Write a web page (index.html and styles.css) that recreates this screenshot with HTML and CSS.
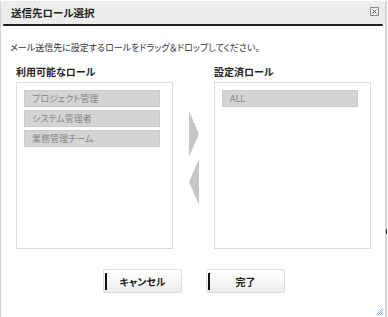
FILE: index.html
```html
<!DOCTYPE html>
<html lang="ja">
<head>
<meta charset="utf-8">
<link rel="stylesheet" href="styles.css">
</head>
<body>
<div class="dialog">
  <div class="header">
    <span class="title">送信先ロール選択</span>
    <span class="close" aria-label="閉じる">
      <svg width="9" height="9" viewBox="0 0 9 9"><rect x="0.5" y="0.5" width="8" height="8" fill="#f4f4f4" stroke="#8a8a8a"/><path d="M2.5 2.5 L6.5 6.5 M6.5 2.5 L2.5 6.5" stroke="#555" stroke-width="1"/></svg>
    </span>
  </div>
  <div class="rule"></div>
  <div class="content">
    <p class="lead">メール送信先に設定するロールをドラッグ＆ドロップしてください。</p>
    <div class="columns">
      <div class="col">
        <h3 class="col-title">利用可能なロール</h3>
        <div class="box">
          <div class="item">プロジェクト管理</div>
          <div class="item">システム管理者</div>
          <div class="item">業務管理チーム</div>
        </div>
      </div>
      <div class="arrows">
        <svg width="10" height="95" viewBox="0 0 10 95"><polygon points="0,0 10,23 0,46" fill="#c6c6c6"/><polygon points="10,48 0,71 10,94" fill="#c6c6c6"/></svg>
      </div>
      <div class="col">
        <h3 class="col-title">設定済ロール</h3>
        <div class="box">
          <div class="item">ALL</div>
        </div>
      </div>
    </div>
    <div class="buttons">
      <button class="btn">キャンセル</button>
      <button class="btn">完了</button>
    </div>
  </div>
  <svg class="grip" width="9" height="9" viewBox="0 0 9 9"><path d="M8 1 L1 8 M8 3 L3 8 M8 5 L5 8 M8 7 L7 8" stroke="#7fbde6" stroke-width="1"/></svg>
  <span class="scrollmark"></span>
</div>
</body>
</html>
```
FILE: styles.css
```css
* { box-sizing: border-box; }
html, body { margin: 0; padding: 0; background: #fff; }
body {
  font-family: "Noto Sans CJK JP", "Noto Sans", sans-serif;
  font-feature-settings: "palt";
  color: #333;
}
.dialog {
  position: relative;
  width: 387px;
  height: 317px;
  border-left: 1px solid #d4d4d4;
  border-right: 2px solid #d4d4d4;
  border-bottom: 1px solid #d4d4d4;
  background: #fff;
}
.header {
  margin-top: 1px;
  height: 23px;
  background: #ececec;
  border-radius: 4px 4px 0 0;
  display: flex;
  align-items: center;
  justify-content: space-between;
  padding: 0 6px 0 10px;
}
.title {
  font-size: 10.5px;
  font-weight: bold;
  color: #222;
  line-height: 14px;
}
.close { display: flex; margin-top: -3px; }
.rule {
  height: 2px;
  margin: 0 2px;
  background: #1e1e1e;
  border-radius: 1px;
}
.content { padding: 0 0 0 9px; }
.lead {
  margin: 15px 0 0;
  font-size: 9px;
  line-height: 14px;
  color: #333;
}
.columns {
  display: grid;
  grid-template-columns: 157px 41px 157px;
  margin: 10px 0 0 6px;
}
.col-title {
  margin: 0 0 3px;
  font-size: 10px;
  line-height: 14px;
  font-weight: bold;
  color: #222;
}
.box {
  height: 167px;
  border: 1px solid #dcdcdc;
  padding: 7px 12px 0 7px;
  display: flex;
  flex-direction: column;
  gap: 3px;
}
.item {
  height: 17px;
  background: #d4d4d4;
  border: 1px solid #c9c9c9;
  font-size: 9px;
  line-height: 15px;
  padding-left: 7px;
  color: #868686;
}
.arrows {
  padding: 46px 0 0 16px;
}
.arrows svg { display: block; }
.buttons {
  display: flex;
  gap: 24px;
  margin: 20px 0 0 93px;
}
.btn {
  position: relative;
  width: 79px;
  height: 24px;
  border: 1px solid #dedede;
  border-radius: 2px;
  background: linear-gradient(#ffffff, #f6f6f6 60%, #ececec);
  font-family: "Noto Sans CJK JP", "Noto Sans", sans-serif;
  font-feature-settings: "palt";
  font-size: 10px;
  font-weight: bold;
  color: #222;
  padding: 0;
}
.btn::before {
  content: "";
  position: absolute;
  left: 1px;
  top: 3px;
  width: 2px;
  height: 17px;
  background: #111;
}
.grip {
  position: absolute;
  right: 1px;
  bottom: 1px;
}
.scrollmark {
  position: absolute;
  right: -2px;
  top: 228px;
  width: 1px;
  height: 5px;
  background: #222;
}
```
